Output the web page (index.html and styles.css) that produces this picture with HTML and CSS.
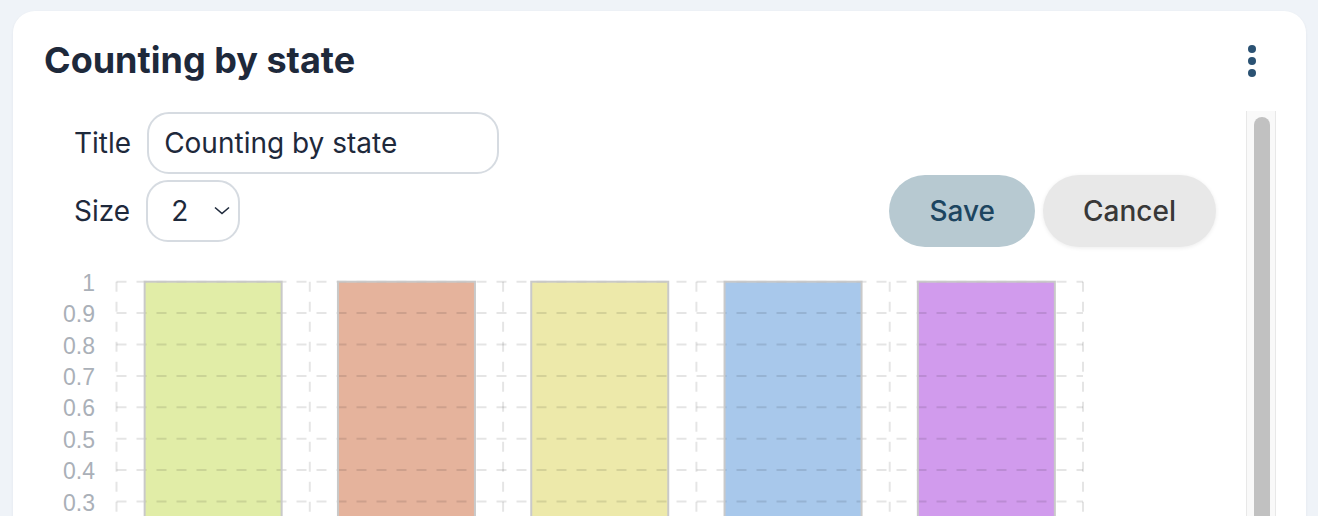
FILE: index.html
```html
<!DOCTYPE html>
<html lang="en">
<head>
    <meta charset="UTF-8">
    <meta name="viewport" content="width=device-width, initial-scale=1.0">
    <title>Counting by state</title>
    <link rel="stylesheet" href="styles.css">
</head>

<body>
    <!-- Widget card -->
    <div class="card">
        <div class="card-head">
            <h2 class="card-title">Counting by state</h2>
            <button class="menu-btn" type="button" aria-label="More options">
                <svg width="10" height="34" viewBox="0 0 10 34">
                    <circle cx="5" cy="5" r="4"/>
                    <circle cx="5" cy="17" r="4"/>
                    <circle cx="5" cy="29" r="4"/>
                </svg>
            </button>
        </div>

        <div class="card-body">
            <div class="pane">
                <!-- Edit form -->
                <form class="edit-form">
                    <div class="form-row">
                        <label class="form-label" for="chart-title">Title</label>
                        <input id="chart-title" class="text-input" type="text" value="Counting by state">
                    </div>
                    <div class="form-row row-size">
                        <label class="form-label" for="chart-size">Size</label>
                        <div class="select-wrap">
                            <select id="chart-size" class="size-select">
                                <option>1</option>
                                <option selected>2</option>
                                <option>3</option>
                            </select>
                            <svg class="chevron" width="16" height="9" viewBox="0 0 16 9">
                                <path d="M1 1.5 L8 7.5 L15 1.5"/>
                            </svg>
                        </div>
                        <div class="form-actions">
                            <button type="button" class="btn btn-save">Save</button>
                            <button type="button" class="btn btn-cancel">Cancel</button>
                        </div>
                    </div>
                </form>

                <!-- Bar chart -->
                <svg class="chart" width="1100" height="349" viewBox="0 0 1100 349">
                    <g class="bars">
                        <rect x="100.65" y="19.7" width="137" height="314" fill="#e1eda7"/>
                        <rect x="293.95" y="19.7" width="137" height="314" fill="#e5b39c"/>
                        <rect x="487.25" y="19.7" width="137" height="314" fill="#ede9aa"/>
                        <rect x="680.55" y="19.7" width="137" height="314" fill="#a8c8eb"/>
                        <rect x="873.85" y="19.7" width="137" height="314" fill="#d19bed"/>
                    </g>
                    <g class="grid">
                        <line x1="72.5" y1="19.7" x2="1039" y2="19.7"/>
                        <line x1="72.5" y1="51.1" x2="1039" y2="51.1"/>
                        <line x1="72.5" y1="82.5" x2="1039" y2="82.5"/>
                        <line x1="72.5" y1="113.9" x2="1039" y2="113.9"/>
                        <line x1="72.5" y1="145.3" x2="1039" y2="145.3"/>
                        <line x1="72.5" y1="176.7" x2="1039" y2="176.7"/>
                        <line x1="72.5" y1="208.1" x2="1039" y2="208.1"/>
                        <line x1="72.5" y1="239.5" x2="1039" y2="239.5"/>
                        <line x1="72.5" y1="270.9" x2="1039" y2="270.9"/>
                        <line x1="72.5" y1="302.3" x2="1039" y2="302.3"/>
                        <line x1="72.5" y1="333.7" x2="1039" y2="333.7"/>
                        <line x1="72.5" y1="19.7" x2="72.5" y2="333.7"/>
                        <line x1="265.8" y1="19.7" x2="265.8" y2="333.7"/>
                        <line x1="459.1" y1="19.7" x2="459.1" y2="333.7"/>
                        <line x1="652.4" y1="19.7" x2="652.4" y2="333.7"/>
                        <line x1="845.7" y1="19.7" x2="845.7" y2="333.7"/>
                        <line x1="1039" y1="19.7" x2="1039" y2="333.7"/>
                    </g>
                    <g class="bar-edges">
                        <rect x="100.65" y="19.7" width="137" height="314"/>
                        <rect x="293.95" y="19.7" width="137" height="314"/>
                        <rect x="487.25" y="19.7" width="137" height="314"/>
                        <rect x="680.55" y="19.7" width="137" height="314"/>
                        <rect x="873.85" y="19.7" width="137" height="314"/>
                    </g>
                    <g class="ticks">
                        <text x="51" y="20.7">1</text>
                        <text x="51" y="52.1">0.9</text>
                        <text x="51" y="83.5">0.8</text>
                        <text x="51" y="114.9">0.7</text>
                        <text x="51" y="146.3">0.6</text>
                        <text x="51" y="177.7">0.5</text>
                        <text x="51" y="209.1">0.4</text>
                        <text x="51" y="240.5">0.3</text>
                        <text x="51" y="271.9">0.2</text>
                        <text x="51" y="303.3">0.1</text>
                        <text x="51" y="334.7">0</text>
                    </g>
                </svg>
            </div>

            <!-- Scroll rail beside the pane -->
            <div class="scroll-rail">
                <div class="scroll-thumb"></div>
            </div>
        </div>
    </div>
</body>
</html>
```

FILE: styles.css
```css
html, body {
    height: 100%;
}

body {
    margin: 0;
    font-family: Inter, "Noto Sans", sans-serif;
    background-color: #eff3f8;
    color: #1e293b;
    overflow: hidden;
}

.card {
    margin: 11px 12px 0 13px;
    padding: 28px 30px 40px 31px;
    background-color: #fff;
    border-radius: 22px;
    box-shadow: 0 1px 3px rgba(30, 41, 59, 0.06);
}

.card-head {
    display: flex;
    align-items: center;
    justify-content: space-between;
}

.card-title {
    margin: 0;
    font-size: 36px;
    font-weight: 700;
    line-height: 1.2;
}

.menu-btn {
    display: flex;
    margin: 0 19px 0 0;
    padding: 0;
    border: none;
    background: none;
    fill: #2b5273;
}

.card-body {
    display: flex;
    margin-top: 29px;
    height: 470px;
}

.pane {
    flex: 1;
    overflow: hidden;
    padding: 1px 30px 0 30px;
}

.scroll-rail {
    box-sizing: border-box;
    width: 30px;
    padding: 6px 0 0 7px;
    background-color: #f9f9f9;
    border-left: 1px solid #e8e8e8;
    border-right: 1px solid #e8e8e8;
}

.scroll-thumb {
    width: 16px;
    height: 440px;
    background-color: #c1c1c1;
    border-radius: 8px;
}

.edit-form {
    display: flex;
    flex-direction: column;
    gap: 1px;
}

.form-row {
    display: flex;
    align-items: center;
    gap: 16px;
}

.form-label {
    font-size: 28px;
}

.text-input {
    box-sizing: border-box;
    width: 352px;
    height: 62px;
    padding: 0 15px;
    font-family: inherit;
    font-size: 28px;
    color: #1e293b;
    border: 2px solid #d6dbe1;
    border-radius: 22px;
    outline: none;
}

.select-wrap {
    position: relative;
}

.size-select {
    box-sizing: border-box;
    width: 94px;
    height: 62px;
    padding: 0 0 0 23px;
    font-family: inherit;
    font-size: 28px;
    color: #1e293b;
    background: #fff;
    border: 2px solid #d6dbe1;
    border-radius: 22px;
    appearance: none;
    -webkit-appearance: none;
    outline: none;
}

.chevron {
    position: absolute;
    top: 26px;
    left: 68px;
    fill: none;
    stroke: #1e293b;
    stroke-width: 1.6;
    pointer-events: none;
}

.form-actions {
    display: flex;
    gap: 8px;
    margin-left: auto;
}

.btn {
    height: 72px;
    padding: 0 40px;
    font-family: inherit;
    font-size: 28px;
    font-weight: 500;
    border: none;
    border-radius: 36px;
}

.btn-save {
    background-color: #b7c9d1;
    color: #1d4560;
}

.btn-cancel {
    background-color: #e8e8e8;
    color: #383838;
    box-shadow: 0 1px 4px rgba(0, 0, 0, 0.08);
}

.chart {
    display: block;
    margin: 15px 0 0 -30px;
}

.grid line {
    stroke: rgba(0, 0, 0, 0.1);
    stroke-width: 2;
    stroke-dasharray: 10 10;
}

.bar-edges rect {
    fill: none;
    stroke: #c9c9c9;
    stroke-width: 2;
}

.ticks text {
    font-family: "Liberation Sans", Arial, sans-serif;
    font-size: 23px;
    fill: #aab0b8;
    text-anchor: end;
    dominant-baseline: central;
}
```
